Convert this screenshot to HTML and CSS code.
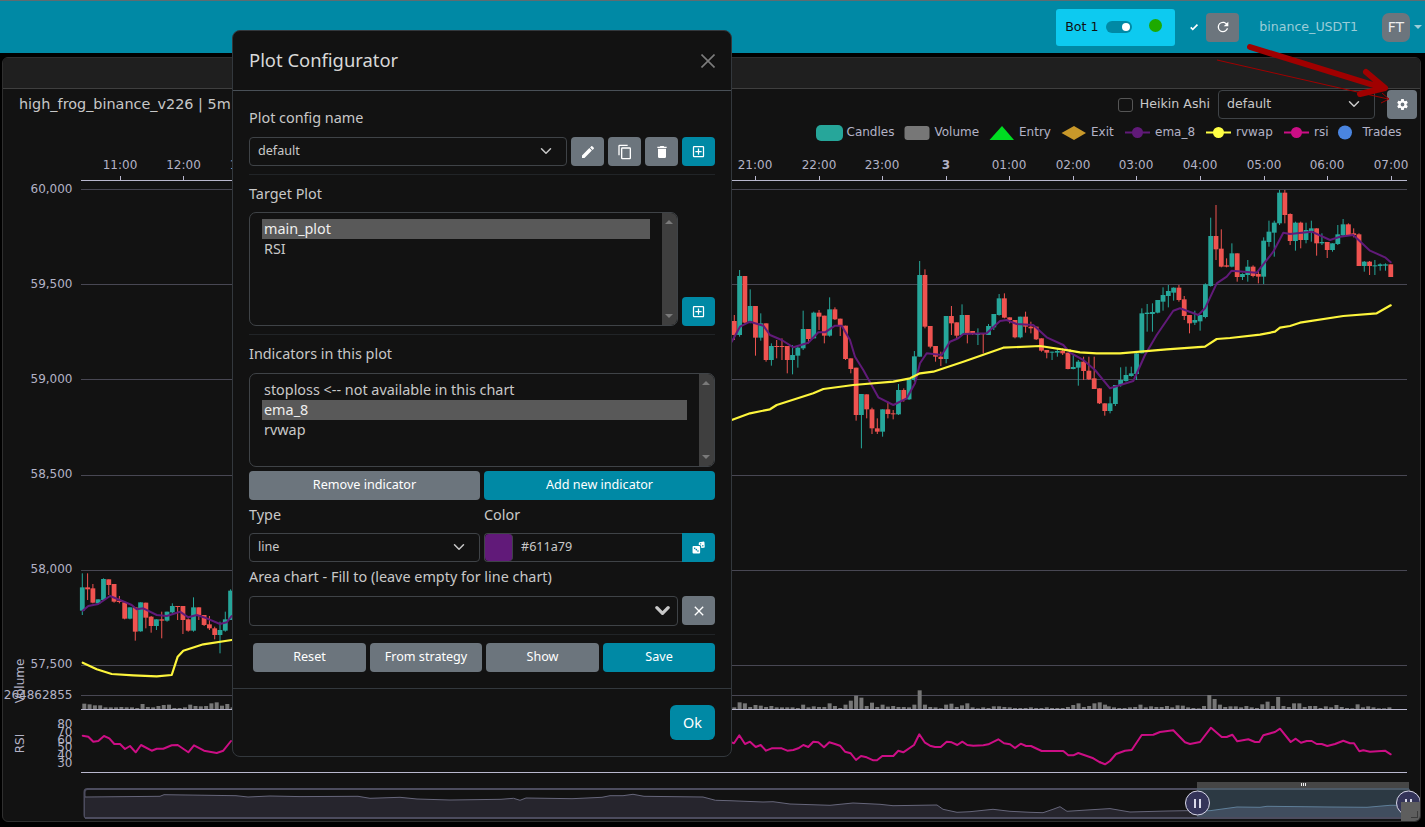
FILE: index.html
```html
<!DOCTYPE html>
<html lang="en">
<head>
    <meta charset="UTF-8">
    <meta name="viewport" content="width=device-width, initial-scale=1.0">
    <title>Plot Configurator</title>
    <link rel="stylesheet" href="styles.css">
</head>
<body>
    <svg class="sprite" width="0" height="0">
        <symbol id="i-pencil" viewBox="0 0 24 24"><path d="M20.71,7.04C21.1,6.65 21.1,6 20.71,5.63L18.37,3.29C18,2.9 17.35,2.9 16.96,3.29L15.12,5.12L18.87,8.87M3,17.25V21H6.75L17.81,9.93L14.06,6.18L3,17.25Z"/></symbol>
        <symbol id="i-copy" viewBox="0 0 24 24"><path d="M19,21H8V7H19M19,5H8A2,2 0 0,0 6,7V21A2,2 0 0,0 8,23H19A2,2 0 0,0 21,21V7A2,2 0 0,0 19,5M16,1H4A2,2 0 0,0 2,3V17H4V3H16V1Z"/></symbol>
        <symbol id="i-delete" viewBox="0 0 24 24"><path d="M19,4H15.5L14.5,3H9.5L8.5,4H5V6H19M6,19A2,2 0 0,0 8,21H16A2,2 0 0,0 18,19V7H6V19Z"/></symbol>
        <symbol id="i-plus" viewBox="0 0 24 24"><path d="M19,19V5H5V19H19M19,3A2,2 0 0,1 21,5V19C21,20.11 20.1,21 19,21H5A2,2 0 0,1 3,19V5A2,2 0 0,1 5,3H19M11,7H13V11H17V13H13V17H11V13H7V11H11V7Z"/></symbol>
        <symbol id="i-refresh" viewBox="0 0 24 24"><path d="M17.65,6.35C16.2,4.9 14.21,4 12,4A8,8 0 0,0 4,12A8,8 0 0,0 12,20C15.73,20 18.84,17.45 19.73,14H17.65C16.83,16.33 14.61,18 12,18A6,6 0 0,1 6,12A6,6 0 0,1 12,6C13.66,6 15.14,6.69 16.22,7.78L13,11H20V4L17.65,6.35Z"/></symbol>
        <symbol id="i-check" viewBox="0 0 24 24"><path d="M9,20.42L2.79,14.21L5.62,11.38L9,14.77L18.88,4.88L21.71,7.71L9,20.42Z"/></symbol>
        <symbol id="i-close" viewBox="0 0 24 24"><path d="M19,6.41L17.59,5L12,10.59L6.41,5L5,6.41L10.59,12L5,17.59L6.41,19L12,13.41L17.59,19L19,17.59L13.41,12L19,6.41Z"/></symbol>
        <symbol id="i-cog" viewBox="0 0 24 24"><path d="M12,15.5A3.5,3.5 0 0,1 8.5,12A3.5,3.5 0 0,1 12,8.5A3.5,3.5 0 0,1 15.5,12A3.5,3.5 0 0,1 12,15.5M19.43,12.97C19.47,12.65 19.5,12.33 19.5,12C19.5,11.67 19.47,11.34 19.43,11L21.54,9.37C21.73,9.22 21.78,8.95 21.66,8.73L19.66,5.27C19.54,5.05 19.27,4.96 19.05,5.05L16.56,6.05C16.04,5.66 15.5,5.32 14.87,5.07L14.5,2.42C14.46,2.18 14.25,2 14,2H10C9.75,2 9.54,2.18 9.5,2.42L9.13,5.07C8.5,5.32 7.96,5.66 7.44,6.05L4.95,5.05C4.73,4.96 4.46,5.05 4.34,5.27L2.34,8.73C2.21,8.95 2.27,9.22 2.46,9.37L4.57,11C4.53,11.34 4.5,11.67 4.5,12C4.5,12.33 4.53,12.65 4.57,12.97L2.46,14.63C2.27,14.78 2.21,15.05 2.34,15.27L4.34,18.73C4.46,18.95 4.73,19.03 4.95,18.95L7.44,17.94C7.96,18.34 8.5,18.68 9.13,18.93L9.5,21.58C9.54,21.82 9.75,22 10,22H14C14.25,22 14.46,21.82 14.5,21.58L14.87,18.93C15.5,18.67 16.04,18.34 16.56,17.94L19.05,18.95C19.27,19.03 19.54,18.95 19.66,18.73L21.66,15.27C21.78,15.05 21.73,14.78 21.54,14.63L19.43,12.97Z"/></symbol>
        <symbol id="i-dice" viewBox="0 0 24 24"><path fill-rule="evenodd" d="M3,9H13A2,2 0 0,1 15,11V21A2,2 0 0,1 13,23H3A2,2 0 0,1 1,21V11A2,2 0 0,1 3,9M5,12A1.5,1.5 0 1,0 5,15A1.5,1.5 0 1,0 5,12M11,17A1.5,1.5 0 1,0 11,20A1.5,1.5 0 1,0 11,17M8,14.5A1.5,1.5 0 1,0 8,17.5A1.5,1.5 0 1,0 8,14.5ZM14,2.5L21.5,1A1.5,1.5 0 0,1 23,2.3L23.5,11A1.5,1.5 0 0,1 22,12.5L17,13V10.5A3,3 0 0,0 14,7.5H12.5V4A1.5,1.5 0 0,1 14,2.5M16,4A1.3,1.3 0 1,0 16,6.6A1.3,1.3 0 1,0 16,4M20,7.6A1.3,1.3 0 1,0 20,10.2A1.3,1.3 0 1,0 20,7.6Z"/></symbol>
        <symbol id="i-chevron" viewBox="0 0 16 16"><path d="M2 5l6 6 6-6" fill="none" stroke="currentColor" stroke-width="2" stroke-linecap="round" stroke-linejoin="round"/></symbol>
        <symbol id="i-chevron-bold" viewBox="0 0 16 16"><path d="M2 5l6 6 6-6" fill="none" stroke="currentColor" stroke-width="3.500" stroke-linecap="round" stroke-linejoin="round"/></symbol>
    </svg>

    <nav class="navbar">
        <div class="bot-box">
            <span class="nav-text">Bot 1</span>
            <span class="toggle"><span class="toggle-knob"></span></span>
            <span class="status-dot"></span>
        </div>
        <svg class="icon check-icon"><use href="#i-check"/></svg>
        <button class="btn btn-grey btn-refresh"><svg class="icon icon-md"><use href="#i-refresh"/></svg></button>
        <span class="exchange nav-text">binance_USDT1</span>
        <span class="avatar">FT</span>
        <span class="caret"></span>
    </nav>

    <main class="card">
        <div class="card-header"></div>
        <div class="card-body">
            <svg class="chart" id="chart" viewBox="3 89 1417 732" width="1417" height="732">
                <g class="grid">
                    <path d="M81 189.5H1407M81 284.5H1407M81 379.5H1407M81 475.5H1407M81 570.5H1407M81 665.5H1407M81 695.5H1407"/>
                </g>
                <g class="axis">
                    <path d="M81 180.5H1407M81 709.5H1407M81 772.5H1407"/>
                    <path d="M120.5 176V180M183.5 176V180M247.5 176V180M755.5 176V180M819.5 176V180M882.5 176V180M946.5 176V180M1009.5 176V180M1073.5 176V180M1136.5 176V180M1200.5 176V180M1264.5 176V180M1327.5 176V180M1391.5 176V180"/>
                </g>
                <g class="labels labels-x">
                    <text x="120" y="169">11:00</text>
                    <text x="183.500" y="169">12:00</text>
                    <text x="247" y="169">13:00</text>
                    <text x="755" y="169">21:00</text>
                    <text x="819" y="169">22:00</text>
                    <text x="882" y="169">23:00</text>
                    <text x="946" y="169" class="bold">3</text>
                    <text x="1009" y="169">01:00</text>
                    <text x="1073" y="169">02:00</text>
                    <text x="1136" y="169">03:00</text>
                    <text x="1200" y="169">04:00</text>
                    <text x="1264" y="169">05:00</text>
                    <text x="1327" y="169">06:00</text>
                    <text x="1391" y="169">07:00</text>
                </g>
                <g class="labels labels-y">
                    <text x="72.500" y="193">60,000</text>
                    <text x="72.500" y="288">59,500</text>
                    <text x="72.500" y="383">59,000</text>
                    <text x="72.500" y="478">58,500</text>
                    <text x="72.500" y="573">58,000</text>
                    <text x="72.500" y="668">57,500</text>
                    <text x="72.500" y="699">264862855</text>
                    <text x="72.500" y="727.500">80</text>
                    <text x="72.500" y="735.500">70</text>
                    <text x="72.500" y="743.500">60</text>
                    <text x="72.500" y="751">50</text>
                    <text x="72.500" y="759">40</text>
                    <text x="72.500" y="767">30</text>
                </g>
                <g class="labels labels-name">
                    <text transform="translate(23.500 681) rotate(-90)">Volume</text>
                    <text transform="translate(23.500 743.500) rotate(-90)">RSI</text>
                </g>

                <g class="legend">
                    <rect x="816" y="125" width="27" height="16" rx="5" fill="#26a69a"/>
                    <text x="846.500" y="136">Candles</text>
                    <rect x="904.500" y="126" width="25" height="14" rx="3" fill="#777777"/>
                    <text x="934.500" y="136">Volume</text>
                    <path d="M989.500 140L1002 126L1014 140Z" fill="#00dd22"/>
                    <text x="1019" y="136">Entry</text>
                    <path d="M1061.500 133L1074 126L1086 133L1074 140Z" fill="#c8982a"/>
                    <text x="1091" y="136">Exit</text>
                    <path d="M1125 132.500H1150" stroke="#611a79" stroke-width="2"/>
                    <circle cx="1137.500" cy="132.500" r="5.500" fill="#611a79"/>
                    <text x="1155" y="136">ema_8</text>
                    <path d="M1206 132.500H1231" stroke="#ffff44" stroke-width="2"/>
                    <circle cx="1218.500" cy="132.500" r="5.500" fill="#ffff44"/>
                    <text x="1236" y="136">rvwap</text>
                    <path d="M1284 132.500H1309" stroke="#cc0e85" stroke-width="2"/>
                    <circle cx="1296.500" cy="132.500" r="5.500" fill="#cc0e85"/>
                    <text x="1314" y="136">rsi</text>
                    <circle cx="1345" cy="132.500" r="7" fill="#4a85e0"/>
                    <text x="1362.500" y="136">Trades</text>
                </g>

                <g id="volume" fill="#777777"></g>
                <g id="candles"></g>
                <g id="lines" fill="none" stroke-linejoin="round" stroke-linecap="round"></g>
                <g id="slider"></g>
                <g class="slider-handles">
                    <rect x="1197" y="782" width="212" height="6" fill="#464646"/>
                    <path d="M1301 784.500H1306" stroke="#eeeeee" stroke-width="3" stroke-dasharray="1 1"/>
                    <circle cx="1197.500" cy="803" r="12" fill="#343459" stroke="#d8d8e8" stroke-width="1"/>
                    <path d="M1195 799V808M1200 799V808" stroke="#d8d8e8" stroke-width="2"/>
                    <circle cx="1408.500" cy="803" r="12" fill="#343459" stroke="#d8d8e8" stroke-width="1"/>
                    <path d="M1406 799V808M1411 799V808" stroke="#d8d8e8" stroke-width="2"/>
                </g>
            </svg>

            <div class="toolbar">
                <span class="chart-title">high_frog_binance_v226 | 5m</span>
                <div class="toolbar-right">
                    <span class="checkbox"></span>
                    <span class="checkbox-label">Heikin Ashi</span>
                    <div class="select select-chart"><span>default</span><svg class="chevron"><use href="#i-chevron"/></svg></div>
                    <button class="btn btn-grey btn-cog"><svg class="icon icon-sm"><use href="#i-cog"/></svg></button>
                </div>
            </div>
            <span class="resize-grip"></span>
        </div>
    </main>

    <section class="modal">
        <header class="modal-header">
            <h5 class="modal-title">Plot Configurator</h5>
            <svg class="modal-close" viewBox="0 0 14 14"><path d="M.5.5l13 13M13.500.5l-13 13"/></svg>
        </header>
        <div class="modal-body">
            <label class="field-label">Plot config name</label>
            <div class="row">
                <div class="select grow"><span>default</span><svg class="chevron"><use href="#i-chevron"/></svg></div>
                <button class="btn btn-grey btn-icon"><svg class="icon icon-md"><use href="#i-pencil"/></svg></button>
                <button class="btn btn-grey btn-icon"><svg class="icon icon-md"><use href="#i-copy"/></svg></button>
                <button class="btn btn-grey btn-icon"><svg class="icon icon-md"><use href="#i-delete"/></svg></button>
                <button class="btn btn-primary btn-icon"><svg class="icon icon-plus"><use href="#i-plus"/></svg></button>
            </div>
            <hr class="divider">

            <label class="field-label field-label-list">Target Plot</label>
            <div class="row row-end">
                <div class="listbox listbox-target grow">
                    <div class="listbox-items">
                        <div class="option option-active">main_plot</div>
                        <div class="option">RSI</div>
                    </div>
                    <div class="scrollbar"><span class="arrow-up"></span><span class="arrow-down"></span></div>
                </div>
                <button class="btn btn-primary btn-icon"><svg class="icon icon-plus"><use href="#i-plus"/></svg></button>
            </div>
            <hr class="divider">

            <label class="field-label">Indicators in this plot</label>
            <div class="listbox listbox-indicators">
                <div class="listbox-items">
                    <div class="option">stoploss &lt;-- not available in this chart</div>
                    <div class="option option-active">ema_8</div>
                    <div class="option">rvwap</div>
                </div>
                <div class="scrollbar"><span class="arrow-up"></span><span class="arrow-down"></span></div>
            </div>
            <div class="two-col two-col-buttons">
                <button class="btn btn-grey btn-text">Remove indicator</button>
                <button class="btn btn-primary btn-text">Add new indicator</button>
            </div>
            <div class="two-col">
                <div>
                    <label class="field-label field-label-tight">Type</label>
                    <div class="select"><span>line</span><svg class="chevron"><use href="#i-chevron"/></svg></div>
                </div>
                <div>
                    <label class="field-label field-label-tight">Color</label>
                    <div class="color-group">
                        <span class="color-swatch"></span>
                        <span class="color-value">#611a79</span>
                        <button class="btn btn-primary btn-icon btn-square"><svg class="icon icon-dice"><use href="#i-dice"/></svg></button>
                    </div>
                </div>
            </div>
            <label class="field-label field-label-area">Area chart - Fill to (leave empty for line chart)</label>
            <div class="row">
                <div class="select select-tall grow"><svg class="chevron chevron-bold"><use href="#i-chevron-bold"/></svg></div>
                <button class="btn btn-grey btn-icon"><svg class="icon icon-md"><use href="#i-close"/></svg></button>
            </div>
            <hr class="divider divider-last">
            <div class="action-row">
                <button class="btn btn-grey btn-text">Reset</button>
                <button class="btn btn-grey btn-text">From strategy</button>
                <button class="btn btn-grey btn-text">Show</button>
                <button class="btn btn-primary btn-text">Save</button>
            </div>
        </div>
        <footer class="modal-footer">
            <button class="btn btn-primary btn-ok">Ok</button>
        </footer>
    </section>

    <svg class="arrows" viewBox="0 0 1425 827" width="1425" height="827">
        <path class="arrow-thin" d="M1217 60L1388 99M1382 93L1389 99L1381 103"/>
        <path class="arrow-thick" d="M1250 47L1383 88M1366 72L1385 88L1360 94"/>
    </svg>

    <script src="chart.js"></script>
</body>
</html>
```

FILE: styles.css
```css
*{
    box-sizing: border-box;
}
body{
    margin: 0;
    height: 827px;
    overflow: hidden;
    background-color: #000000;
    font-family: "DejaVu Sans", sans-serif;
    font-size: 12.6px;
    color: #c8c8c8;
}
.sprite{
    position: absolute;
}

/* buttons */
.btn{
    display: flex;
    align-items: center;
    justify-content: center;
    height: 29px;
    padding: 0;
    border: none;
    border-radius: 4px;
    color: #ffffff;
    font-family: "Noto Sans", sans-serif;
    font-size: 12.6px;
}
.btn-grey{
    background-color: #6c757d;
}
.btn-primary{
    background-color: #0089a5;
}
.btn-text{
    padding-bottom: 2px;
}
.btn-icon{
    flex: 0 0 33px;
    width: 33px;
}
.btn-square{
    border-radius: 0 4px 4px 0;
}
.icon{
    fill: #ffffff;
}
.icon-md{
    width: 16px;
    height: 16px;
}
.icon-plus{
    width: 15px;
    height: 15px;
}
.icon-dice{
    width: 13px;
    height: 13px;
}
.icon-sm{
    width: 13px;
    height: 13px;
}

/* navbar */
.navbar{
    display: flex;
    align-items: center;
    height: 53px;
    padding-right: 3px;
    justify-content: flex-end;
    background-color: #0089a5;
    border-top: 1px solid #5f6b70;
}
.nav-text{
    padding-bottom: 2px;
}
.bot-box{
    display: flex;
    align-items: center;
    width: 119px;
    height: 37px;
    padding-left: 9px;
    margin-right: 14px;
    background-color: #0dcaf0;
    border-radius: 3px;
    color: #111111;
}
.toggle{
    display: flex;
    align-items: center;
    justify-content: flex-end;
    width: 26px;
    height: 12px;
    margin-left: 7px;
    padding-right: 2px;
    background-color: #0089a5;
    border-radius: 6px;
}
.toggle-knob{
    width: 8px;
    height: 8px;
    border-radius: 50%;
    background-color: #ffffff;
}
.status-dot{
    width: 13px;
    height: 13px;
    margin-left: 17px;
    margin-top: -3px;
    border-radius: 50%;
    background-color: #1eaa00;
}
.check-icon{
    width: 10px;
    height: 10px;
    margin-right: 7px;
}
.btn-refresh{
    width: 33px;
    height: 29px;
}
.exchange{
    margin-left: 20px;
    color: #9acdd8;
}
.avatar{
    display: flex;
    align-items: center;
    justify-content: center;
    width: 28px;
    height: 29px;
    margin-left: 24px;
    border-radius: 7px;
    background-color: #6c757d;
    color: #eeeeee;
    font-size: 14px;
}
.caret{
    width: 0;
    height: 0;
    margin-left: 4px;
    border-left: 4px solid transparent;
    border-right: 4px solid transparent;
    border-top: 4px solid #9acdd8;
}

/* chart card */
.card{
    display: flex;
    flex-direction: column;
    width: 1419px;
    height: 765px;
    margin: 4px 0 0 2px;
    background-color: #121212;
    border: 1px solid #2f2f2f;
    border-radius: 6px;
    overflow: hidden;
}
.card-header{
    flex: 0 0 31px;
    background-color: #1f1f1f;
    border-bottom: 1px solid #3f3f3f;
}
.card-body{
    position: relative;
    flex: 1;
}
.chart{
    position: absolute;
    left: 0;
    top: 0;
}
.grid path{
    stroke: #484753;
    fill: none;
}
.axis path{
    stroke: #b9b8ce;
    fill: none;
}
.labels text, .legend text{
    font-family: "DejaVu Sans", sans-serif;
    font-size: 12px;
    fill: #b3b2c6;
}
.labels-x text{
    text-anchor: middle;
}
.labels-x .bold{
    font-weight: bold;
}
.labels-y text{
    text-anchor: end;
}
.labels-name text{
    text-anchor: middle;
}

.toolbar{
    position: relative;
    display: flex;
    justify-content: space-between;
    align-items: flex-start;
    padding: 1px 3px 0 16px;
}
.chart-title{
    margin-top: 4px;
    font-size: 14.4px;
    line-height: 20px;
}
.toolbar-right{
    display: flex;
    align-items: center;
    height: 29px;
}
.checkbox{
    width: 15px;
    height: 14px;
    border: 1px solid #555555;
    border-radius: 3px;
}
.checkbox-label{
    margin-left: 7px;
    margin-right: 8px;
    padding-bottom: 2px;
}
.select{
    display: flex;
    align-items: center;
    justify-content: space-between;
    height: 29px;
    padding: 0 14px 1px 8px;
    border: 1px solid #3f4347;
    border-radius: 4px;
    background-color: #121212;
    font-family: "Noto Sans", sans-serif;
    font-size: 12.6px;
    color: #c8c8c8;
}
.select span{
    padding-bottom: 1px;
}
.select-chart{
    width: 157px;
    margin-right: 12px;
    font-family: "DejaVu Sans", sans-serif;
}
.select-tall{
    height: 30px;
    justify-content: flex-end;
    padding-right: 7px;
}
.chevron{
    width: 12px;
    height: 12px;
    color: #c8c8c8;
}
.chevron-bold{
    width: 15px;
    height: 15px;
}
.btn-cog{
    width: 30px;
    height: 29px;
}
.resize-grip{
    position: absolute;
    right: 0;
    bottom: 0;
    width: 19px;
    height: 19px;
    background-color: #5e5e5e;
}
.resize-grip::after{
    content: "";
    position: absolute;
    right: 2px;
    bottom: 3px;
    width: 6px;
    height: 6px;
    border-right: 1px solid #3a3a3a;
    border-bottom: 1px solid #3a3a3a;
}

/* modal */
.modal{
    position: absolute;
    left: 232px;
    top: 30px;
    width: 500px;
    height: 727px;
    display: flex;
    flex-direction: column;
    background-color: #121212;
    border: 1px solid #33383d;
    border-radius: 8px;
    font-family: "Noto Sans", sans-serif;
    font-size: 14.4px;
    color: #c8c8c8;
}
.modal-header{
    display: flex;
    align-items: center;
    justify-content: space-between;
    flex: 0 0 60px;
    padding: 0 16px;
    border-bottom: 1px solid #495057;
}
.modal-title{
    margin: 0 0 2px;
    font-size: 18.4px;
    font-weight: 400;
    color: #d8d8d8;
}
.modal-close{
    width: 14px;
    height: 14px;
}
.modal-close path{
    stroke: #7c7c7c;
    stroke-width: 1.6;
    fill: none;
}
.modal-body{
    flex: 1;
    padding: 17px 16px 0;
}
.field-label{
    display: block;
    height: 20px;
    line-height: 20px;
    margin-bottom: 9px;
}
.field-label-list{
    margin-bottom: 8px;
}
.field-label-tight{
    margin-top: 5px;
    margin-bottom: 8px;
}
.field-label-area{
    margin-top: 5px;
}
.row{
    display: flex;
    gap: 4px;
}
.row-end{
    align-items: flex-end;
}
.grow{
    flex: 1;
}
.divider{
    height: 1px;
    margin: 8px 0 9px;
    border: none;
    background-color: #212427;
}
.divider-last{
    margin-bottom: 8px;
}
.listbox{
    display: flex;
    border: 1px solid #3f4347;
    border-radius: 7px;
    overflow: hidden;
}
.listbox-target{
    height: 114px;
}
.listbox-indicators{
    height: 94px;
}
.listbox-items{
    flex: 1;
    padding: 6px 12px;
}
.option{
    height: 20px;
    line-height: 20px;
    padding-left: 2px;
}
.option-active{
    background-color: #595959;
    color: #eeeeee;
}
.scrollbar{
    position: relative;
    flex: 0 0 15px;
    background-color: #3f3f3f;
}
.arrow-up, .arrow-down{
    position: absolute;
    left: 3px;
    width: 0;
    height: 0;
    border-left: 4px solid transparent;
    border-right: 4px solid transparent;
}
.arrow-up{
    top: 7px;
    border-bottom: 4px solid #7a7a7a;
}
.arrow-down{
    bottom: 7px;
    border-top: 4px solid #7a7a7a;
}
.two-col{
    display: grid;
    grid-template-columns: 1fr 1fr;
    gap: 4px;
}
.two-col-buttons{
    margin-top: 4px;
}
.color-group{
    display: flex;
    align-items: stretch;
    height: 29px;
    border: 1px solid #3f4347;
    border-right: none;
    border-radius: 4px;
}
.color-swatch{
    flex: 0 0 28px;
    background-color: #611a79;
    border-radius: 4px;
    border-right: 1px solid #3f4347;
}
.color-value{
    flex: 1;
    padding-left: 8px;
    line-height: 26px;
    font-size: 12.6px;
}
.color-group .btn{
    height: 29px;
    margin-top: -1px;
}
.action-row{
    display: grid;
    grid-template-columns: 113px 112px 113px 112px;
    gap: 4px;
    padding-left: 4px;
}
.modal-footer{
    display: flex;
    justify-content: flex-end;
    align-items: flex-start;
    flex: 0 0 68px;
    padding: 16px;
    border-top: 1px solid #33383d;
}
.btn-ok{
    width: 45px;
    height: 35px;
    border-radius: 6px;
    font-size: 14.4px;
}

/* red annotation arrows drawn over the screenshot */
.arrows{
    position: absolute;
    left: 0;
    top: 0;
    pointer-events: none;
}
.arrow-thin{
    fill: none;
    stroke: #a00000;
    stroke-width: 1;
}
.arrow-thick{
    fill: none;
    stroke: #a00000;
    stroke-width: 6;
    stroke-linecap: round;
    stroke-linejoin: round;
}
```

FILE: chart.js
```js
var NS = "http://www.w3.org/2000/svg";
var STEP = 5.296;
var RED = "#ef5350";
var GREEN = "#26a69a";

// candles as [green?, body top, body bottom, wick top, wick bottom], read in zoomed px
var leftCandles = [
    [1,82,152,40,165],[0,82,88,40,120],[0,85,128,72,130],[1,118,130,118,132],[1,57,120,55,122],
    [0,58,75,58,105],[0,72,125,72,128],[0,122,126,108,130],[0,127,176,127,178],[1,142,176,142,178],
    [0,142,215,142,242],[1,127,214,127,215],[0,128,173,128,205],[0,170,198,168,218],[1,178,198,178,210],
    [0,178,182,155,235],[1,155,182,155,185],[1,138,157,130,160],[0,138,140,138,180],[0,138,180,138,222],
    [0,178,212,175,215],[1,142,212,112,215],[0,142,165,142,180],[0,165,195,165,198],[0,193,205,168,210],
    [0,205,225,200,238],[1,210,225,185,280],[1,178,212,155,215],[1,92,180,88,180]
];
var midCandles = [
    [0,423,465,405,480],[1,288,465,270,470],[0,288,428,288,430],[1,378,425,328,430],[0,378,473,378,527],
    [1,430,473,400,482],[0,430,540,430,545],[1,498,540,490,557],[0,498,500,480,535],[0,498,500,475,540],
    [0,498,540,498,580],[1,525,540,495,583],[1,503,527,500,563],[1,447,505,392,510],[0,447,477,447,490],
    [1,398,475,395,475],[0,398,410,390,450],[0,407,467,407,490],[1,388,467,352,470],[0,388,418,382,420],
    [0,416,437,416,468],[0,437,537,437,540],[0,535,567,535,580],[0,563,705,563,722],[1,642,705,642,805],
    [0,643,688,643,715],[0,688,745,683,762],[0,745,755,715,762],[1,688,755,688,770],[0,688,702,665,715],
    [0,700,703,690,718],[1,630,703,612,705],[0,630,660,625,665],[1,598,658,598,660],[1,529,600,513,605],
    [1,285,530,243,530],[0,285,440,268,445],[0,438,500,438,505],[0,498,530,498,545],[0,530,537,515,558],
    [1,408,537,408,550],[0,408,430,378,465],[0,427,467,427,475],[1,405,465,373,465],[0,405,460,405,490],
    [0,453,462,453,465],[1,460,465,445,495],[0,460,462,462,520],[1,438,465,432,465],[1,402,442,402,450],
    [1,355,405,342,407],[0,355,413,340,415],[0,412,420,412,430],[0,420,472,420,475],[1,410,472,410,475],
    [0,410,440,395,458],[0,440,445,425,460],[0,440,478,440,480],[0,475,512,475,515],[0,510,518,510,535],
    [1,515,518,515,540],[1,513,518,505,530],[0,513,520,505,525],[0,518,567,518,568],[1,561,567,525,568]
];
var rightCandles = [
    [1,545,563,540,617],[0,545,573,530,600],[0,572,598,530,600],[0,595,627,530,627],[0,625,670,625,672],
    [0,670,693,670,707],[1,670,693,650,700],[1,615,672,615,678],[1,600,615,562,620],[1,585,603,560,605],
    [1,580,588,560,590],[1,520,582,515,600],[1,400,520,385,520],[1,398,402,372,455],[1,396,402,370,455],
    [1,360,398,360,400],[1,345,365,322,392],[1,333,348,315,382],[1,323,338,322,362],[0,323,360,315,365],
    [0,358,408,348,420],[0,405,430,405,460],[1,420,428,392,435],[1,405,424,405,452],[1,313,411,310,415],
    [1,168,318,113,320],[0,168,208,75,240],[0,206,260,148,262],[0,256,260,235,262],[1,220,260,190,262],
    [0,220,291,220,305],[1,282,291,280,300],[1,260,285,240,305],[0,260,288,256,292],[0,282,290,272,310],
    [1,182,290,172,312],[1,155,186,122,200],[1,128,158,122,230],[1,38,130,30,135],[0,38,105,30,130],
    [0,102,183,100,195],[1,128,183,125,212],[0,128,180,125,205],[1,150,180,128,190],[1,145,153,122,185],
    [0,145,190,145,227],[1,186,190,160,195],[0,186,210,186,234],[1,190,210,190,215],[1,163,192,135,195],
    [1,133,166,117,168],[0,133,165,130,168],[0,160,165,145,172],[0,163,258,160,258],[1,245,258,243,275],
    [0,245,258,243,285],[1,256,259,240,285],[1,253,258,250,272],[1,253,257,250,272],[0,253,291,253,291]
];

var volumeLeft = [16,14,11,11,5,5,5,6,5,5,3,15,6,5,9,12,13,3,3,5,13,9,8,9,17,20,10,15,5,12];
var volumeMid = [5,20,17,6,12,10,6,9,5,5,5,5,3,13,5,8,6,6,17,9,3,13,25,40,34,9,19,6,13,7,9,6,6,5,13,56,13,6,5,2,13,16,6,11,17,5,2,5,3,8,8,6,5,3,3,3,5,3,3,5,3,3,3,6,12,17,6,9,17,20,13];
var volumeRight = [8,5,3,3,5,6,13,5,8,6,6,9,5,11,10,5,3,2,9,42,30,13,6,8,8,5,9,5,3,14,22,9,36,9,6,17,17,6,9,9,3,8,5,12,6,3,2,14,5,8,5,2,2,5];

var emaLeft = [[248,152],[265,138],[295,132],[330,108],[365,122],[395,135],[410,148],[430,145],[470,165],[500,168],[540,155],[565,172],[590,165],[620,175],[660,192],[680,187],[695,168]];
var emaMid = [[5,485],[30,440],[60,425],[100,437],[120,465],[155,480],[190,502],[235,488],[265,457],[285,457],[315,437],[335,437],[360,480],[375,530],[400,570],[445,652],[490,675],[530,655],[555,610],[570,550],[590,520],[635,525],[660,485],[685,475],[700,462],[770,460],[810,423],[830,420],[860,432],[910,435],[950,472],[1000,495],[1020,518]];
var emaRight = [[0,518],[40,540],[75,570],[120,625],[190,603],[225,525],[260,465],[310,392],[330,385],[385,405],[405,385],[440,310],[470,290],[485,272],[560,278],[610,215],[640,158],[660,162],[725,155],[780,180],[810,170],[850,165],[900,212],[945,232],[962,247]];

var rvwapLeft = [[248,308],[290,328],[335,342],[400,346],[470,349],[515,345],[533,290],[550,272],[610,253],[695,240]];
var rvwapMid = [[5,720],[60,700],[120,688],[140,675],[250,640],[280,627],[370,615],[490,605],[540,595],[570,580],[610,575],[700,545],[820,503],[930,498],[1020,512]];
var rvwapRight = [[0,512],[30,517],[80,520],[150,520],[290,508],[405,500],[440,477],[480,474],[570,464],[615,455],[630,443],[660,438],[690,428],[820,408],[920,400],[962,376]];

var rsiLeft = [[248,527],[265,530],[280,545],[295,543],[312,528],[328,535],[343,552],[360,552],[375,567],[390,558],[407,577],[423,555],[455,572],[470,566],[490,566],[515,556],[533,555],[565,577],[582,556],[612,572],[650,579],[670,572],[693,543]];
var rsiMid = [[5,187],[12,190],[28,166],[45,192],[60,185],[77,201],[92,195],[108,212],[125,205],[155,205],[172,212],[190,210],[205,205],[220,195],[235,201],[250,185],[265,187],[282,202],[298,187],[315,192],[330,197],[345,215],[362,220],[378,240],[393,228],[410,232],[430,241],[441,241],[457,228],[490,228],[505,212],[520,217],[552,195],[568,163],[585,188],[600,197],[615,201],[632,201],[650,185],[665,187],[682,195],[697,185],[712,195],[730,197],[760,196],[775,193],[805,178],[822,190],[840,193],[855,204],[872,191],[888,198],[903,198],[935,213],[1000,213],[1015,226],[1030,226],[1045,219],[1090,235],[1110,247]];
var rsiRight = [[0,247],[15,253],[30,243],[48,222],[75,212],[95,210],[125,165],[160,164],[180,156],[220,151],[255,187],[270,192],[300,186],[333,143],[365,171],[380,171],[397,164],[412,184],[445,178],[465,186],[478,186],[490,166],[525,156],[540,146],[572,186],[587,176],[603,188],[620,183],[635,183],[650,192],[665,192],[682,198],[705,192],[730,182],[750,190],[762,190],[778,214],[790,211],[810,215],[855,212],[872,223]];

// navigator outline in page px
var navLine = [[85,797],[160,796.3],[164,794.7],[236,795.7],[248,797],[270,796],[300,796.6],[358,796.3],[370,798.3],[400,797.3],[417,799],[450,800],[501,799.3],[513.5,798.3],[520,800.3],[526,798],[572,798.7],[602,797.3],[610,795.7],[623,795.7],[633,794.3],[644,796.3],[703,797],[715.5,800.3],[730,800.7],[763,802],[773,801.7],[790,804],[830,805.3],[853,803],[880,804.3],[893,805.7],[937,805],[943,809.3],[957,812.3],[970,811.7],[993,809.3],[1010,811.3],[1030,812.3],[1043,812.7],[1053,809.3],[1060,806.7],[1067,811.3],[1087,810],[1110,808.6],[1130,812],[1167,811],[1185,810.7],[1210,810.7],[1237,807],[1260,807.3],[1267,806.3],[1330,807],[1367,807.3],[1390,805.3],[1408,805.3]];

function make(tag, attrs, parent){
    var el = document.createElementNS(NS, tag);
    for(var k in attrs){
        el.setAttribute(k, attrs[k]);
    }
    parent.appendChild(el);
    return el;
}

function drawCandles(list, startX, oy){
    var g = document.getElementById("candles");
    list.forEach(function(c, i){
        var x = startX + STEP * i;
        var color = c[0] ? GREEN : RED;
        make("rect", {x: x - 0.5, y: oy + c[3] / 3, width: 1, height: (c[4] - c[3]) / 3, fill: color}, g);
        make("rect", {x: x - 2.4, y: oy + c[1] / 3, width: 4.8, height: Math.max((c[2] - c[1]) / 3, 1), fill: color}, g);
    });
}

function drawVolume(list, startX){
    var g = document.getElementById("volume");
    list.forEach(function(h, i){
        make("rect", {x: startX + STEP * i - 2, y: 709 - h / 3, width: 4, height: h / 3}, g);
    });
}

function drawLine(points, ox, oy, color, width){
    var pts = points.map(function(p){
        return (ox + p[0] / 3).toFixed(1) + "," + (oy + p[1] / 3).toFixed(1);
    }).join(" ");
    make("polyline", {points: pts, stroke: color, "stroke-width": width}, document.getElementById("lines"));
}

function drawSlider(){
    var g = document.getElementById("slider");
    var all = navLine.map(function(p){ return p[0] + "," + p[1]; });
    var inSel = navLine.filter(function(p){ return p[0] >= 1197; }).map(function(p){ return p[0] + "," + p[1]; });

    make("rect", {x: 84.5, y: 789, width: 1325, height: 29, rx: 3, fill: "none", stroke: "#4c4c5e", "stroke-width": 2}, g);
    make("polygon", {points: "85,818 " + all.join(" ") + " 1408,818", fill: "#26252d"}, g);
    make("polyline", {points: all.join(" "), fill: "none", stroke: "#66667a"}, g);
    make("rect", {x: 1197, y: 789, width: 212, height: 29, fill: "#2c3943"}, g);
    make("polygon", {points: "1197,817 1197,811 " + inSel.join(" ") + " 1408,817", fill: "#404d5e"}, g);
    make("polyline", {points: "1197,811 " + inSel.join(" "), fill: "none", stroke: "#5f7f99"}, g);
    make("path", {d: "M85 818H1409", stroke: "#4c4c5e", "stroke-width": 2}, g);
    make("path", {d: "M1197 789H1409", stroke: "#4c5a68", "stroke-width": 2}, g);
}

drawVolume(volumeLeft, 84.3);
drawVolume(volumeMid, 734.3);
drawVolume(volumeRight, 1108.7);

drawCandles(leftCandles, 82.3, 560);
drawCandles(midCandles, 734.3, 180);
drawCandles(rightCandles, 1078.3, 180);

drawLine(emaLeft, 0, 560, "#611a79", 2);
drawLine(emaMid, 730, 180, "#611a79", 2);
drawLine(emaRight, 1070, 180, "#611a79", 2);
drawLine(rvwapLeft, 0, 560, "#fdf53c", 2.2);
drawLine(rvwapMid, 730, 180, "#fdf53c", 2.2);
drawLine(rvwapRight, 1070, 180, "#fdf53c", 2.2);
drawLine(rsiLeft, 0, 560, "#cc0e85", 2);
drawLine(rsiMid, 730, 680, "#cc0e85", 2);
drawLine(rsiRight, 1100, 680, "#cc0e85", 2);

drawSlider();
```
